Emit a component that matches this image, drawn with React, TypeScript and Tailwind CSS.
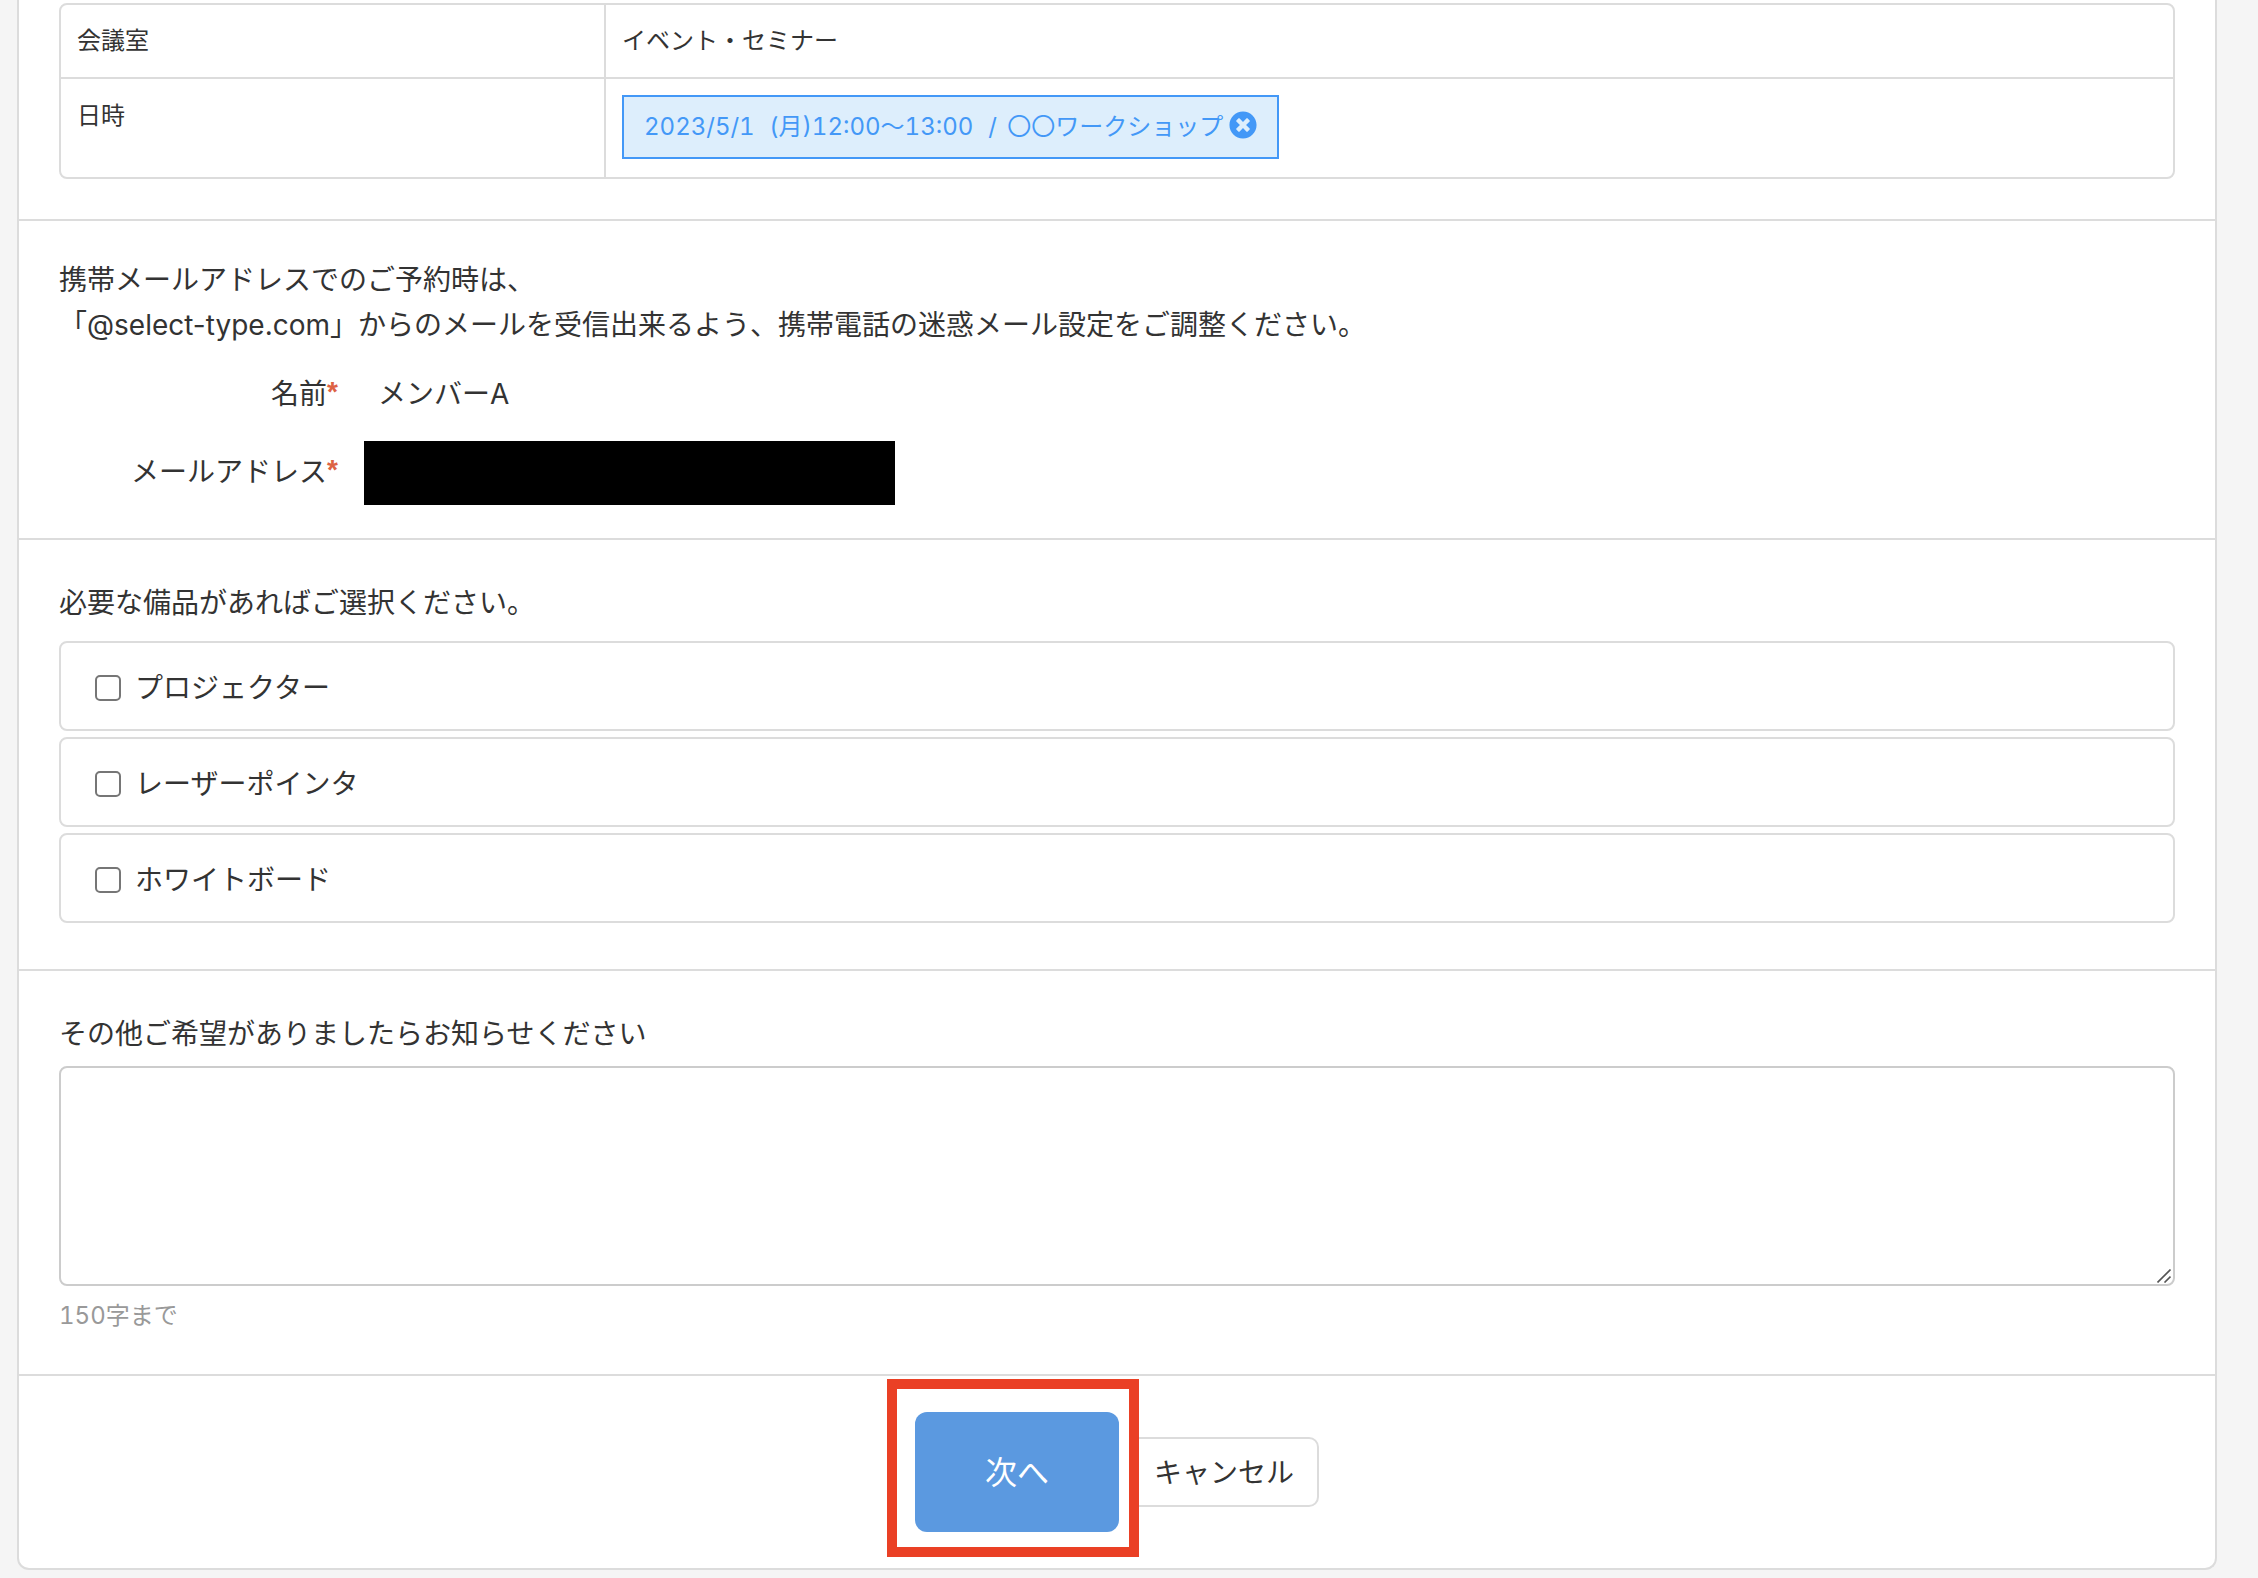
import React, { useState } from 'react';
import { FaTimesCircle } from 'react-icons/fa';

const equipment = [
  { id: 'projector', name: 'プロジェクター' },
  { id: 'pointer', name: 'レーザーポインタ' },
  { id: 'whiteboard', name: 'ホワイトボード' },
];

const RequiredMark = () => (
  <span className="font-['Liberation_Sans',sans-serif] font-bold leading-none align-[3px] text-[#dd6244]">*</span>
);

export default function App() {
  const [checked, setChecked] = useState<string[]>([]);
  const [comment, setComment] = useState('');

  const toggle = (id: string) =>
    setChecked((prev) => (prev.includes(id) ? prev.filter((c) => c !== id) : [...prev, id]));

  return (
    <div className="min-h-screen bg-[#f5f5f5] pl-[17px] pr-[41px] pb-2 font-['Inter','Noto_Sans_CJK_JP',sans-serif] text-[28px] leading-[45px] text-[#333]">
      <form className="bg-white border-2 border-t-0 border-[#dcdcdc] rounded-b-xl" onSubmit={(e) => e.preventDefault()}>
        {/* Reservation summary */}
        <section className="px-10 pt-[3px] pb-10 border-b-2 border-[#dcdcdc]">
          <div className="border-2 border-[#dcdcdc] rounded-lg overflow-hidden">
            <table className="w-full table-fixed text-2xl leading-9 text-left">
              <tbody>
                <tr className="border-b-2 border-[#dcdcdc]">
                  <th scope="row" className="w-[544px] h-[73px] px-4 border-r-2 border-[#dcdcdc] font-normal">会議室</th>
                  <td className="px-4">イベント・セミナー</td>
                </tr>
                <tr>
                  <th scope="row" className="px-4 pt-[19px] border-r-2 border-[#dcdcdc] font-normal align-top">日時</th>
                  <td className="px-4 py-4">
                    <div className="inline-flex items-center h-16 px-5 border-2 border-[#4398f7] bg-[#ddeefc] text-[#4398f7] align-top mb-[2px]">
                      <span className="whitespace-pre tabular-nums">
                        2023/5/1 <span className="ml-2">(月)12:00〜13:00</span>
                        <span className="ml-[2px]">{'  /'}</span>
                        <span className="ml-1"> 〇〇ワークショップ</span>
                      </span>
                      <button type="button" aria-label="削除" className="ml-[6px] mb-1">
                        <FaTimesCircle className="w-7 h-7" />
                      </button>
                    </div>
                  </td>
                </tr>
              </tbody>
            </table>
          </div>
        </section>

        {/* Member */}
        <section className="px-10 pt-[37px] pb-[33px] border-b-2 border-[#dcdcdc]">
          <p>
            携帯メールアドレスでのご予約時は、
            <br />
            「@select-type.com」からのメールを受信出来るよう、携帯電話の迷惑メール設定をご調整ください。
          </p>
          <dl className="grid grid-cols-[279px_1fr] gap-x-[26px] mt-6">
            <dt className="text-right">名前<RequiredMark /></dt>
            <dd className="pl-[14px]">メンバーA</dd>
            <dt className="text-right pt-[33px]">メールアドレス<RequiredMark /></dt>
            <dd className="pt-6">
              <div className="w-[531px] h-16 bg-black" />
            </dd>
          </dl>
        </section>

        {/* Equipment */}
        <section className="px-10 pt-[41px] pb-[46px] border-b-2 border-[#dcdcdc]">
          <fieldset>
            <legend>必要な備品があればご選択ください。</legend>
            <div className="flex flex-col gap-[6px] mt-[15px]">
              {equipment.map((item) => (
                <label key={item.id} className="flex items-center h-[90px] pl-[34px] pt-1 border-2 border-[#dcdcdc] rounded-lg">
                  <input
                    type="checkbox"
                    className="appearance-none w-[26px] h-[26px] mr-[14px] border-2 border-[#767676] rounded-[5px] bg-white checked:bg-[#4398f7]"
                    checked={checked.includes(item.id)}
                    onChange={() => toggle(item.id)}
                  />
                  {item.name}
                </label>
              ))}
            </div>
          </fieldset>
        </section>

        {/* Requests */}
        <section className="px-10 pt-[41px] pb-10 border-b-2 border-[#dcdcdc]">
          <label htmlFor="comment" className="block">その他ご希望がありましたらお知らせください</label>
          <div className="relative mt-[9px]">
            <textarea
              id="comment"
              className="block w-full h-[220px] p-4 border-2 border-[#ccc] rounded-lg resize-none"
              maxLength={150}
              value={comment}
              onChange={(e) => setComment(e.target.value)}
            />
            <svg viewBox="0 0 14 14" className="absolute right-1 bottom-[3px] w-[14px] h-[14px]" aria-hidden="true">
              <path d="M.5 13.5 13.5.5M7.5 13.5 13.5 7.5" stroke="#555" strokeWidth="1.6" />
            </svg>
          </div>
          <p className="mt-3 text-2xl leading-9 text-[#999] tabular-nums">150字まで</p>
        </section>

        {/* Actions */}
        <div className="flex items-center justify-center gap-[10px] pt-9 pb-9">
          <div className="relative">
            <button type="submit" className="block w-[204px] h-[120px] rounded-xl bg-[#5b99e0] text-white text-[32px]">次へ</button>
            <div className="absolute z-10 -left-7 -right-5 -top-[33px] -bottom-[25px] border-[10px] border-[#ea4025] pointer-events-none" />
          </div>
          <button type="button" className="h-[70px] px-[23px] pt-[2px] border-2 border-[#dcdcdc] rounded-[10px] bg-white">キャンセル</button>
        </div>
      </form>
    </div>
  );
}
